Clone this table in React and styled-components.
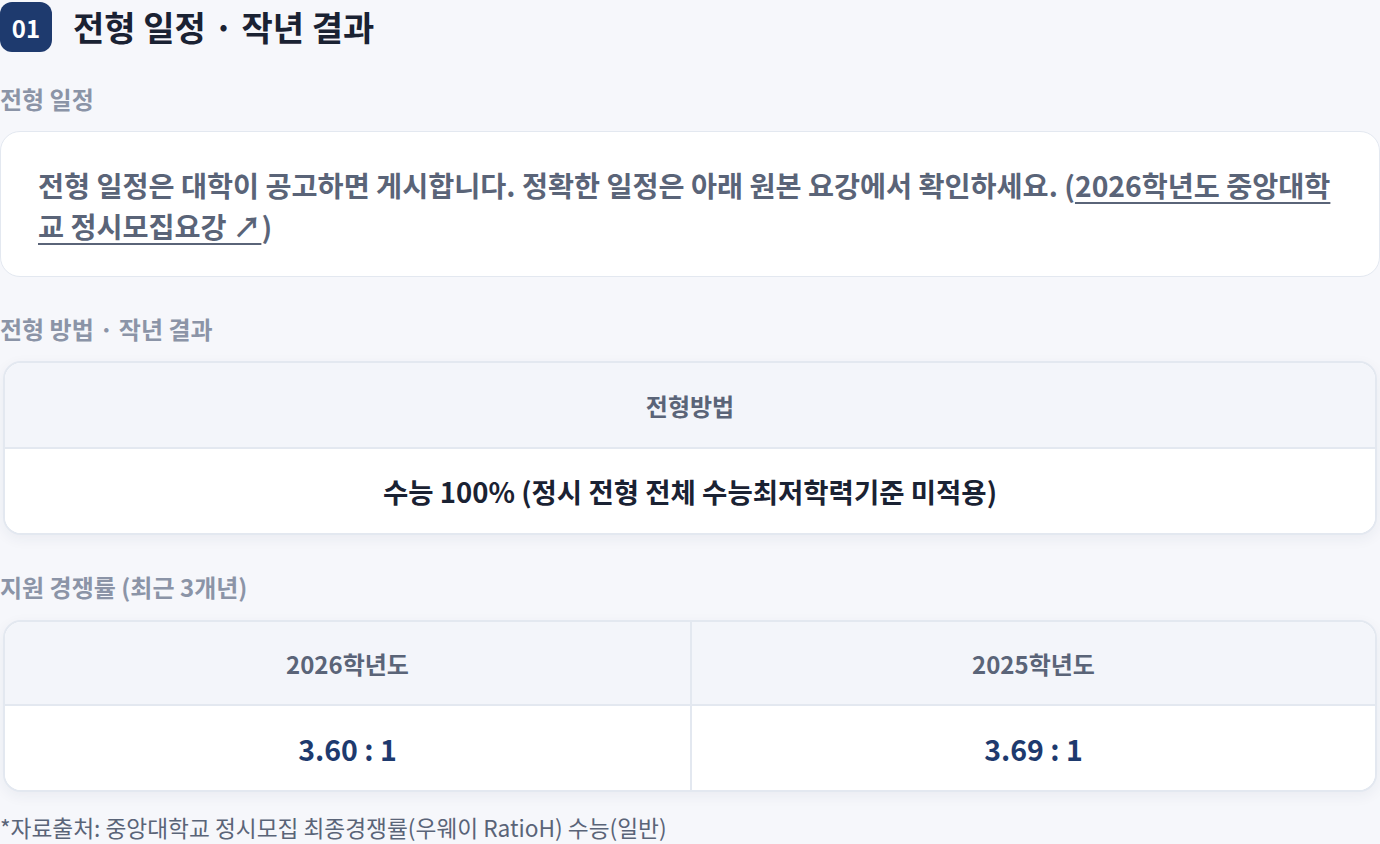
import React from 'react';
import styled, { createGlobalStyle } from 'styled-components';

const GlobalStyle = createGlobalStyle`
  html, body {
    margin: 0;
    padding: 0;
    background: #f6f7fb;
  }
  body {
    font-family: "Noto Sans CJK KR", "Noto Sans", sans-serif;
    color: #1a2233;
  }
`;

const Page = styled.div`
  width: 1380px;
  display: flex;
  flex-direction: column;
`;

const SectionHead = styled.div`
  display: flex;
  align-items: center;
  gap: 21px;
  height: 54px;
`;

const Badge = styled.div`
  width: 52px;
  height: 50px;
  border-radius: 12px;
  background: #1e3a6e;
  color: #fff;
  font-size: 24px;
  font-weight: 700;
  display: flex;
  align-items: center;
  justify-content: center;
`;

const Title = styled.h2`
  margin: 0;
  font-size: 34px;
  line-height: 44px;
  font-weight: 700;
  color: #1a2233;
`;

const SubHead = styled.h3`
  margin: ${({ $top }) => $top}px 0 ${({ $bottom }) => $bottom || 16}px;
  font-size: 24px;
  line-height: 32px;
  font-weight: 600;
  color: #8b94a7;
`;

const NoticeCard = styled.div`
  background: #fff;
  border: 1px solid #e3e8f0;
  border-radius: 20px;
  padding: 32px 37px 30px;
  font-size: 28.3px;
  line-height: 41px;
  font-weight: 600;
  color: #5a6478;
`;

const SourceLink = styled.a`
  color: #5a6478;
  text-decoration: underline;
  text-underline-offset: 5px;
  text-decoration-thickness: 2px;
`;

const TableCard = styled.div`
  margin: 0 3px;
  background: #fff;
  border: 2px solid #e3e8f0;
  border-radius: 18px;
  overflow: hidden;
  box-shadow: 0 4px 14px rgba(30, 50, 90, 0.06);
`;

const Grid = styled.div`
  display: grid;
  grid-template-columns: repeat(${({ $cols }) => $cols}, 1fr);
`;

const HeadCell = styled.div`
  height: ${({ $h }) => $h || 84}px;
  display: flex;
  align-items: center;
  justify-content: center;
  background: #f3f5fa;
  border-bottom: 2px solid #e3e8f0;
  font-size: 24px;
  font-weight: 600;
  color: #5a6478;
  & + & {
    border-left: 2px solid #e3e8f0;
  }
`;

const BodyCell = styled.div`
  height: 84px;
  display: flex;
  align-items: center;
  justify-content: center;
  background: #fff;
  font-size: ${({ $size }) => $size || 27.5}px;
  font-weight: 700;
  color: ${({ $accent }) => ($accent ? '#1e3a6e' : '#1a2233')};
  & + & {
    border-left: 2px solid #e3e8f0;
  }
`;

const Footnote = styled.p`
  margin: 21px 0 0;
  font-size: 22.7px;
  line-height: 30px;
  color: #5a6478;
`;

const rates = [
  { year: '2026학년도', rate: '3.60 : 1' },
  { year: '2025학년도', rate: '3.69 : 1' },
];

export default function App() {
  return (
    <Page>
      <GlobalStyle />
      <SectionHead>
        <Badge>01</Badge>
        <Title>전형 일정 · 작년 결과</Title>
      </SectionHead>

      <SubHead $top={29}>전형 일정</SubHead>
      <NoticeCard>
        전형 일정은 대학이 공고하면 게시합니다. 정확한 일정은 아래 원본 요강에서 확인하세요. (
        <SourceLink href="#">2026학년도 중앙대학교 정시모집요강 ↗</SourceLink>)
      </NoticeCard>

      <SubHead $top={36}>전형 방법 · 작년 결과</SubHead>
      <TableCard>
        <Grid $cols={1}>
          <HeadCell>전형방법</HeadCell>
          <BodyCell>수능 100% (정시 전형 전체 수능최저학력기준 미적용)</BodyCell>
        </Grid>
      </TableCard>

      <SubHead $top={36} $bottom={17}>지원 경쟁률 (최근 3개년)</SubHead>
      <TableCard>
        <Grid $cols={rates.length}>
          {rates.map((r) => (
            <HeadCell key={r.year} $h={82}>{r.year}</HeadCell>
          ))}
          {rates.map((r) => (
            <BodyCell key={r.rate} $accent $size={28.5}>{r.rate}</BodyCell>
          ))}
        </Grid>
      </TableCard>

      <Footnote>*자료출처: 중앙대학교 정시모집 최종경쟁률(우웨이 RatioH) 수능(일반)</Footnote>
    </Page>
  );
}
